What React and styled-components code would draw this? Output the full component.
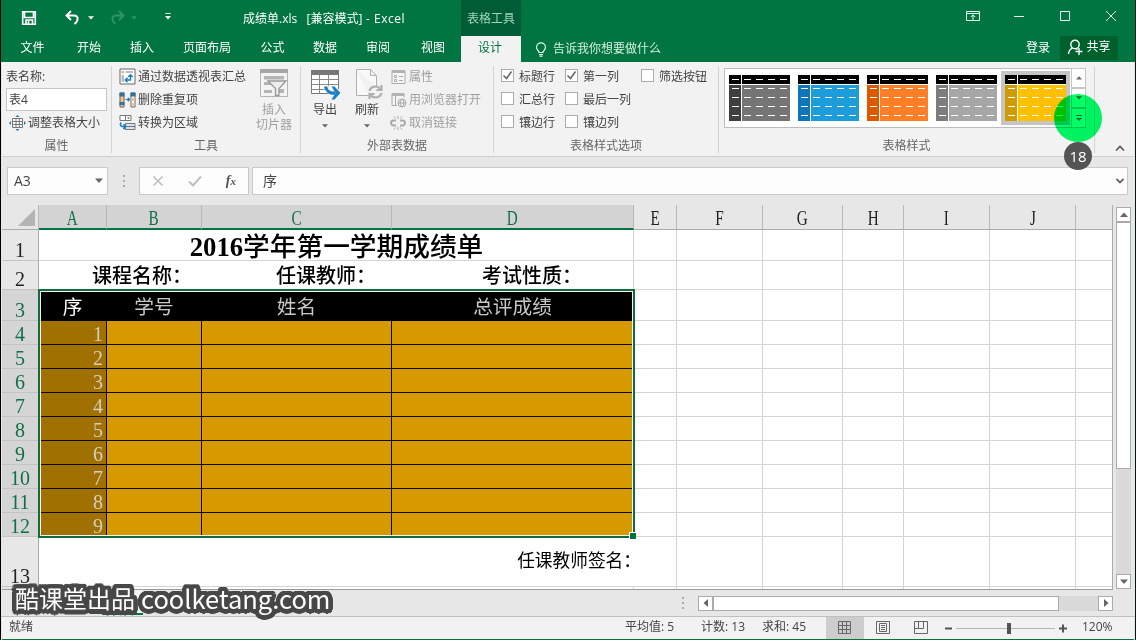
import React from "react";
import styled, { createGlobalStyle, css } from "styled-components";

const GREEN = "#007542";
const UI = '"Open Sans", "Noto Sans CJK SC", sans-serif';
const SONG = '"Liberation Serif", "Noto Sans CJK SC", serif';

const Global = createGlobalStyle`
  * { box-sizing: border-box; }
  body { margin: 0; background: #000; overflow: hidden; }
`;

const Window = styled.div`
  position: relative;
  width: 1136px;
  height: 640px;
  display: flex;
  flex-direction: column;
  border-left: 1px solid #000;
  border-right: 1px solid #001a0e;
  background: #e7e7e7;
  font: 12px/14px ${UI};
  color: #444;
  white-space: nowrap;
  overflow: hidden;
`;

/* ---------- title bar ---------- */
const TopArea = styled.header`
  height: 62px;
  background: ${GREEN};
  color: #fff;
  display: flex;
  flex-direction: column;
`;
const TitleRow = styled.div`
  height: 36px;
  display: flex;
  align-items: center;
`;
const QuickAccess = styled.div`
  width: 242px;
  display: flex;
  align-items: center;
  padding-left: 20px;
  svg { display: block; }
`;
const QuickItem = styled.span`
  margin-left: ${(p) => p.$gap}px;
`;
const DocTitle = styled.div`
  width: 218px;
  padding-top: 1px;
  white-space: pre;
  span { letter-spacing: 0.5px; }
`;
const ContextTitle = styled.div`
  width: 60px;
  height: 36px;
  background: #005c35;
  color: #9fd8b8;
  text-align: center;
  line-height: 37px;
`;
const WindowButtons = styled.div`
  margin-left: auto;
  display: flex;
  align-items: center;
  padding: 0 16px 3px 0;
`;
const TabRow = styled.nav`
  height: 26px;
  display: flex;
  align-items: stretch;
`;
const Tab = styled.div`
  width: ${(p) => p.$w}px;
  display: flex;
  align-items: center;
  justify-content: center;
  padding-bottom: 2px;
  &:first-child { padding-left: 2px; }
  ${(p) => p.$active && css`background: #f2f2f2; color: ${GREEN}; padding-right: 2px;`}
`;
const TellMe = styled.div`
  display: flex;
  align-items: center;
  gap: 6px;
  padding-left: 14px;
  color: #d5efe0;
`;
const Account = styled.div`
  margin-left: auto;
  display: flex;
  align-items: center;
  padding: 0 17px 2px 0;
`;
const Share = styled.div`
  width: 58px;
  height: 24px;
  margin-left: 10px;
  padding-bottom: 2px;
  background: #00602c;
  display: flex;
  align-items: center;
  justify-content: center;
  gap: 3px;
`;

/* ---------- ribbon ---------- */
const Ribbon = styled.section`
  height: 95px;
  margin: 0 1px;
  background: #f2f2f2;
  border-bottom: 1px solid #d0d0d0;
  display: flex;
`;
const Group = styled.div`
  width: ${(p) => p.$w}px;
  height: 87px;
  margin-top: 4px;
  border-right: 1px solid #d4d4d4;
  display: flex;
  flex-direction: column;
`;
const GroupBody = styled.div`
  height: 70px;
  display: flex;
  padding-left: ${(p) => p.$pl || 0}px;
`;
const GroupLabel = styled.div`
  text-align: center;
  line-height: 20px;
  height: 17px;
  color: #666;
`;
const Stack = styled.div`
  width: ${(p) => p.$w}px;
  display: flex;
  flex-direction: column;
`;
const Command = styled.div`
  height: 23px;
  display: flex;
  align-items: center;
  gap: ${(p) => p.$gap ?? 2}px;
  padding-left: ${(p) => p.$pl || 0}px;
  padding-bottom: 2px;
  color: ${(p) => (p.$off ? "#a0a0a0" : "#444")};
  svg { flex: none; display: block; }
`;
const NameInput = styled.div`
  width: 101px;
  height: 23px;
  margin: -1px 0 1px;
  background: #fff;
  border: 1px solid #c6c6c6;
  line-height: 21px;
  padding-left: 2px;
`;
const BigButton = styled.div`
  width: ${(p) => p.$w}px;
  display: flex;
  flex-direction: column;
  align-items: center;
  padding-top: ${(p) => (p.$tall ? 3 : 2)}px;
  line-height: 15px;
  text-align: center;
  color: ${(p) => (p.$off ? "#a0a0a0" : "#444")};
  svg { display: block; }
  span { margin: ${(p) => (p.$tall ? "1px 0 6px" : "4px 0 0")}; }
`;
const Check = styled.span`
  width: 13px;
  height: 13px;
  margin-bottom: 2px;
  border: 1px solid #ababab;
  background: #fff;
  display: flex;
  align-items: center;
  justify-content: center;
`;
const Gallery = styled.div`
  display: flex;
  height: 60px;
  margin-top: 2px;
  border: 1px solid #bdbdbd;
  background: #fff;
`;
const StyleItem = styled.div`
  width: 69px;
  height: 54px;
  margin-top: 2px;
  padding: 4px 4px 4px 4px;
  background: ${(p) => (p.$selected ? "#c5c5c5" : "#fff")};
  svg { display: block; }
`;
const GalleryButtons = styled.div`
  width: 15px;
  margin: -1px -1px -1px 1px;
  display: flex;
  flex-direction: column;
`;
const GalleryButton = styled.div`
  height: 20px;
  border: 1px solid #c6c6c6;
  display: flex;
  align-items: center;
  justify-content: center;
`;
const Collapse = styled.div`
  margin: auto 9px 4px auto;
  svg { display: block; }
`;

/* ---------- formula bar ---------- */
const FormulaBar = styled.div`
  height: 48px;
  padding: 10px 7px 0 6px;
  display: flex;
`;
const BarBox = styled.div`
  height: 28px;
  width: ${(p) => (p.$w ? p.$w + "px" : "auto")};
  flex: ${(p) => (p.$w ? "none" : 1)};
  margin-left: ${(p) => p.$ml || 0}px;
  border: 1px solid #c9c9c9;
  background: #fdfdfd;
  display: flex;
  align-items: center;
  justify-content: space-between;
  padding: ${(p) => p.$pad || "0 4px 0 6px"};
  font-size: 14px;
  svg { display: block; }
`;
const Fx = styled.em`
  font: italic bold 14px "Liberation Serif", serif;
  color: #555;
  small { font-size: 11px; }
`;
const Dots = styled.div`
  width: 31px;
  display: flex;
  flex-direction: column;
  align-items: center;
  justify-content: center;
  gap: 3px;
  height: 28px;
  i { width: 2px; height: 2px; background: #ababab; }
`;

/* ---------- sheet ---------- */
const SheetArea = styled.main`
  height: 385px;
  display: flex;
  margin: 0 1px;
`;
const Sheet = styled.div`
  position: relative;
  width: 1111px;
  height: 385px;
  background: #fff;
  border-right: 1px solid #ababab;
  border-bottom: 1px solid #999;
  overflow: hidden;
`;
const Row = styled.div`
  display: flex;
  height: ${(p) => p.$h}px;
`;
const ColHead = styled.div`
  width: ${(p) => p.$w}px;
  height: 25px;
  flex: none;
  font: 20px/27px ${SONG};
  text-align: center;
  color: ${(p) => (p.$on ? "#0f7048" : "#222")};
  background: ${(p) => (p.$on ? "#d3d3d3" : "#e7e7e7")};
  border-right: 1px solid #b8b8b8;
  border-bottom: ${(p) => (p.$on ? "2px solid " + GREEN : "1px solid #ababab")};
  svg { display: block; margin: 4px 0 0 16px; }
  span { display: inline-block; transform: scaleX(0.76); }
`;
const RowHead = styled.div`
  width: 37px;
  flex: none;
  font: 20px/20px ${SONG};
  display: flex;
  align-items: flex-end;
  justify-content: center;
  color: ${(p) => (p.$on ? "#0f7048" : "#222")};
  background: ${(p) => (p.$on ? "#d5d5d5" : "#e7e7e7")};
  border-right: 1px solid #ababab;
  border-bottom: 1px solid #c4c4c4;
`;
const Cell = styled.div`
  width: ${(p) => p.$w}px;
  flex: none;
  border-right: 1px solid #d4d4d4;
  border-bottom: 1px solid #d4d4d4;
  display: flex;
  align-items: center;
  justify-content: center;
  font: 20px/1 ${SONG};
  color: #000;
`;
const TitleCell = styled(Cell)`
  font-size: 26.7px;
  font-weight: 500;
  padding: 4px 0 0 1px;
  b { font-weight: 700; }
`;
const InfoCell = styled(Cell)`
  justify-content: flex-start;
  padding: 1px 0 0 53px;
  font-size: 20px;
  font-weight: 500;
`;
const Info = styled.span`
  width: ${(p) => p.$w}px;
  flex: none;
`;
const HeadCell = styled(Cell)`
  background: #000;
  border-color: #000;
  color: ${(p) => (p.$first ? "#fff" : "#c8c8c8")};
  font-size: 19.7px;
  padding-top: 5px;
`;
const DataCell = styled(Cell)`
  background: ${(p) => (p.$first ? "#a07000" : "#d69900")};
  border-color: #0c0a00;
  justify-content: flex-end;
  align-items: flex-end;
  line-height: 20px;
  padding-right: 3px;
  color: #d3cfc4;
`;
const SignCell = styled(Cell)`
  justify-content: flex-end;
  font-size: 17.7px;
  border-right-color: transparent;
  padding-top: 1px;
  span { margin-right: -8px; }
`;
const Selection = styled.div`
  position: absolute;
  left: 36px;
  top: 84px;
  width: 597px;
  height: 249px;
  border: 2px solid #0f6b40;
  box-shadow: inset 0 0 0 1px #f4f4ec;
`;
const Handle = styled.div`
  position: absolute;
  right: -3px;
  bottom: -3px;
  width: 7px;
  height: 7px;
  background: ${GREEN};
  border: solid #fff;
  border-width: 1px 0 0 1px;
`;

/* ---------- scroll bars ---------- */
const Filler = styled.span`
  flex: 1;
`;
const VScroll = styled.div`
  width: 15px;
  margin: 2px 0 0 3px;
  display: flex;
  flex-direction: column;
  background: #dadada;
  height: 382px;
`;
const HScroll = styled.div`
  width: 415px;
  height: 15px;
  display: flex;
  background: #dadada;
`;
const ScrollButton = styled.div`
  width: 15px;
  height: 15px;
  flex: none;
  border: 1px solid #ababab;
  background: #fff;
  display: flex;
  align-items: center;
  justify-content: center;
`;
const Thumb = styled.div`
  width: ${(p) => p.$w}px;
  height: ${(p) => p.$h}px;
  background: #fff;
  border: 1px solid #ababab;
`;

/* ---------- bottom ---------- */
const SheetTabs = styled.div`
  height: 27px;
  display: flex;
  align-items: center;
  padding-right: 22px;
  border-bottom: 1px solid #c0c0c0;
`;
const ActiveSheet = styled.div`
  width: 41px;
  height: 25px;
  margin: 0 auto 1px 101px;
  background: #f4f4f4;
  border-bottom: 2px solid ${GREEN};
`;
const StatusBar = styled.footer`
  height: 23px;
  margin: 0 1px;
  background: #f2f2f2;
  border-bottom: 1px solid ${GREEN};
  display: flex;
  align-items: center;
  padding-left: 7px;
  svg { display: block; }
`;
const Stat = styled.div`
  width: ${(p) => p.$w}px;
  flex: none;
  padding-bottom: 2px;
`;
const ViewButton = styled.div`
  width: 38px;
  height: 22px;
  flex: none;
  display: flex;
  align-items: center;
  justify-content: center;
  background: ${(p) => (p.$on ? "#cdcdcd" : "transparent")};
`;
const Zoom = styled.div`
  display: flex;
  align-items: center;
  width: 142px;
  flex: none;
`;

/* ---------- overlays ---------- */
const ClickSpot = styled.div`
  position: absolute;
  left: 1053px;
  top: 94px;
  width: 48px;
  height: 48px;
  border-radius: 50%;
  background: #00ff66;
  mix-blend-mode: multiply;
`;
const Badge = styled.div`
  position: absolute;
  left: 1063px;
  top: 142px;
  width: 28px;
  height: 28px;
  border-radius: 50%;
  background: #545454;
  color: #fff;
  font: 15px/28px ${UI};
  text-align: center;
`;
/* a ring of hard shadows gives the letters a thick outline with round corners */
const OUTLINE = [2.5, 4.5]
  .flatMap((r) =>
    Array.from({ length: 20 }, (_, i) => {
      const a = (i * Math.PI) / 10;
      return `${(r * Math.cos(a)).toFixed(2)}px ${(r * Math.sin(a)).toFixed(2)}px 0 #484848`;
    })
  )
  .join(", ");
const Watermark = styled.div`
  position: absolute;
  left: 14px;
  top: 582px;
  display: flex;
  gap: 6px;
  font: 24px/32px "Noto Sans CJK SC", sans-serif;
  color: #fff;
  text-shadow: ${OUTLINE};
  span + span { font-size: 25.5px; }
`;

const Triangle = ({ dir = "down", size = 7, color = "#666" }) => {
  const d = { down: "M0 1.5h8L4 6z", up: "M0 6h8L4 1.5z", left: "M6 0v8L1.5 4z", right: "M2 0v8l4.5-4z" }[dir];
  return <svg width={size} height={size} viewBox="0 0 8 8"><path d={d} fill={color} /></svg>;
};

const PivotIcon = () => (
  <svg width="17" height="17" viewBox="0 0 17 17" fill="none">
    <path d="M1 1h15v15H1z" fill="#fff" stroke="#666" />
    <path d="M2.500 3h2.500v2.500H2.500zM6.500 3H14v2H6.500zM2.500 7H5v7H2.500z" fill="#bbb" />
    <path d="M6.500 12h5V7M8.500 9.800L6.300 12l2.200 2.200M9.300 9l2.200-2.200L13.700 9" stroke="#1c7db8" strokeWidth="1.500" />
  </svg>
);
const DedupeIcon = () => (
  <svg width="17" height="16" viewBox="0 0 17 16" fill="none">
    <path d="M1 1h4v14H1z" fill="#f0c48a" stroke="#666" />
    <path d="M.5.5h5v4h-5z" fill="#3b6f96" /><path d="M.5 10h5v3h-5z" fill="#3b6f96" />
    <path d="M12 1h4v14h-4z" fill="#fff" stroke="#666" />
    <path d="M11.500.5h5v4h-5z" fill="#3b6f96" /><path d="M12.500 6h3v3h-3zM12.500 11h3v3h-3z" fill="#f0c48a" />
    <path d="M6.500 7.500h4M8.700 5.700l1.900 1.800-1.900 1.800" stroke="#1c7db8" strokeWidth="1.200" />
  </svg>
);
const ConvertIcon = () => (
  <svg width="17" height="17" viewBox="0 0 17 17" fill="none">
    <path d="M1 1.500h11v5H1zM6.500 1.500v5" fill="#fff" stroke="#777" />
    <path d="M8 3.500h3L9.500 5z" fill="#555" />
    <path d="M6.500 9.500H16v6H6.500zM6.500 12.500H16" fill="#d8e2ee" stroke="#777" />
    <path d="M2 8.500c-1.500 3 0 4.500 4.500 4M4.500 10.200l2.300 2.300-2.300 2.700" stroke="#1c7db8" strokeWidth="1.600" />
  </svg>
);
const ResizeIcon = () => (
  <svg width="17" height="16" viewBox="0 0 17 16" fill="none">
    <path d="M3.500 3.500h10v9h-10z" fill="#fff" stroke="#777" />
    <path d="M3.500 6.500h10M3.500 9.500h10M7 3.500v9M10.300 3.500v9" stroke="#777" />
    <path d="M6.500 2l2-2 2 2zM6.500 14l2 2 2-2zM2 6L0 8l2 2zM15 6l2 2-2 2z" fill="#1c7db8" />
  </svg>
);
const SlicerIcon = () => (
  <svg width="30" height="30" viewBox="0 0 30 30" fill="none">
    <path d="M1.500 1.500h27v27h-27z" fill="#f4f4f4" stroke="#b5b5b5" />
    <path d="M1 1h28v4H1z" fill="#a6a6a6" />
    <path d="M5 8h20v3.500H5zM5 14h20v3H5zM5 22h8v3H5zM20 21h5v4h-5z" fill="#b5b5b5" />
    <path d="M9 13h18l-7 7.500v7h-3.500v-7z" fill="#eee" stroke="#999" strokeWidth="1.300" />
  </svg>
);
const ExportIcon = () => (
  <svg width="32" height="32" viewBox="0 0 32 32" fill="none">
    <path d="M2.500 2h27v22.500h-27z" fill="#fff" stroke="#777" />
    <path d="M2 1h28v5H2z" fill="#777" />
    <path d="M2.500 10.500h27M2.500 15.500h27M2.500 20.500h27M10.500 6v18M19.500 6v18" stroke="#888" />
    <path d="M17 17c1 5 5 7 9 6.500M23 18l7.500 6-7.500 6" stroke="#f2f2f2" strokeWidth="5" />
    <path d="M16.500 17.500c1 5 5 7 9.500 6.500" stroke="#1e7fbe" strokeWidth="3.200" />
    <path d="M22.500 17.500h3l6 6.500-6 6.500h-3l4-6.500z" fill="#1e7fbe" />
  </svg>
);
const RefreshIcon = () => (
  <svg width="32" height="32" viewBox="0 0 32 32" fill="none">
    <path d="M5.500 .5h14l6 6v11M5.500 .5v26h12M19.500 .5v6h6" fill="#f9f9f9" stroke="#b0b0b0" />
    <path d="M18.500 22c1-5 8-6 11-2M30.500 16v5h-5M30.500 24c-1 5-8 6-11 2M18.500 30v-5h5" stroke="#b0b0b0" strokeWidth="2.200" />
  </svg>
);
const PropsIcon = () => (
  <svg width="15" height="16" viewBox="0 0 15 16" fill="none">
    <path d="M1 1.500h13v13H1z" fill="#f7f7f7" stroke="#aaa" />
    <path d="M1 1h13v3H1z" fill="#b4b4b4" />
    <path d="M3.500 6.500h2v2h-2zM3.500 10.500h2v2h-2zM8 7.500h4M8 11.500h4" stroke="#aaa" />
  </svg>
);
const BrowserIcon = () => (
  <svg width="16" height="16" viewBox="0 0 16 16" fill="none">
    <path d="M1 13.500V1.500h12v4M1 13.500h5M4.500 4v9" stroke="#aaa" />
    <path d="M1 1h12v3H1z" fill="#b4b4b4" />
    <circle cx="11" cy="11" r="4" fill="#f2f2f2" stroke="#aaa" />
    <path d="M7 11h8M11 7c-2.500 2.500-2.500 5.500 0 8M11 7c2.500 2.500 2.500 5.500 0 8" stroke="#aaa" />
  </svg>
);
const UnlinkIcon = () => (
  <svg width="16" height="16" viewBox="0 0 16 16" fill="none" stroke="#aaa">
    <path d="M6 5.500H3.500a2.500 2.500 0 000 5H6M10 5.500h2.500a2.500 2.500 0 010 5H10" strokeWidth="1.900" />
    <path d="M8 1v3M8 12v3M4 1.500l1.500 2M12 1.500l-1.500 2M4 14.500l1.500-2M12 14.500l-1.500-2" />
  </svg>
);

const Option = ({ on, children }) => (
  <Command $gap={5}>
    <Check>
      {on && <svg width="11" height="11" viewBox="0 0 11 11"><path d="M1.500 5.500l3 3 5-7" fill="none" stroke="#666" strokeWidth="1.600" /></svg>}
    </Check>
    {children}
  </Command>
);

const StyleThumb = ({ side, body, selected }) => (
  <StyleItem $selected={selected}>
    <svg width="61" height="46" viewBox="0 0 61 46">
      <path d="M0 0h61v46H0z" fill={body} />
      <path d="M0 10h12v36H0z" fill={side} />
      <path d="M0 0h61v9H0z" fill="#000" />
      <path d="M0 9.500h61M12.500 0v46" stroke="#fff" />
      {[4.5, 13.5, 22.5, 31.5, 40.5].map((y) => (
        <path key={y} d={`M3 ${y}h7M15 ${y}h7M27 ${y}h7M39 ${y}h7M51 ${y}h7`} stroke="#fff" />
      ))}
    </svg>
  </StyleItem>
);

const STYLES = [
  ["#3f3f3f", "#757575"],
  ["#0f75b8", "#1c9cd8"],
  ["#dd5800", "#ff7f27"],
  ["#7d7d7d", "#a6a6a6"],
  ["#d09a00", "#ffc000"],
];
const COLS = [["A", 68], ["B", 95], ["C", 190], ["D", 242], ["E", 43], ["F", 86], ["G", 80], ["H", 61], ["I", 86], ["J", 86], ["", 37]];
const REST = COLS.slice(4);
const TABS = [["文件", 61], ["开始", 54], ["插入", 52], ["页面布局", 78], ["公式", 53], ["数据", 52], ["审阅", 54], ["视图", 56], ["设计", 60]];

const EmptyCells = () => REST.map(([name, w], i) => <Cell key={i} $w={w} />);

export default function App() {
  return (
    <Window>
      <Global />
      <TopArea>
        <TitleRow>
          <QuickAccess>
            <svg width="16" height="16" viewBox="0 0 16 16" fill="none" stroke="#fff" strokeWidth="1.600"><path d="M1.700 1.700h12.600v12.600H1.700zM3.500 2v5.500h9V2M5 14v-4h6.500v4M7.500 11v3" /></svg>
            <QuickItem $gap={27}>
              <svg width="18" height="16" viewBox="0 0 18 16" fill="none" stroke="#fff" strokeWidth="1.900"><path d="M3 5.500h7c4.500 0 5 5 .5 8.500M7 1L2.500 5.500 7 10" /></svg>
            </QuickItem>
            <QuickItem $gap={6}><Triangle size={6} color="#fff" /></QuickItem>
            <QuickItem $gap={14}>
              <svg width="18" height="16" viewBox="0 0 18 16" fill="none" stroke="#2c9766" strokeWidth="1.800"><path d="M15 5.500H8c-4.500 0-5 5-.5 8.500M11 1l4.500 4.500L11 10" /></svg>
            </QuickItem>
            <QuickItem $gap={5}><Triangle size={6} color="#2c9766" /></QuickItem>
            <QuickItem $gap={27}>
              <svg width="8" height="14" viewBox="0 0 8 14"><path d="M1.500 2.500h5" stroke="#fff" /><path d="M1 5h6L4 8.500z" fill="#fff" /></svg>
            </QuickItem>
          </QuickAccess>
          <DocTitle>{"成绩单.xls   [兼容模式]"}<span>{" - Excel"}</span></DocTitle>
          <ContextTitle>表格工具</ContextTitle>
          <WindowButtons>
            <svg width="154" height="14" viewBox="0 0 154 14" fill="none" stroke="#e6fff2">
              <path d="M1.500 1.500h13v9h-13zM1.500 3.500h13M8 10V5M5.800 7L8 4.800 10.200 7" />
              <path d="M49 6.500h10M95.500 1.500h9v9h-9zM141 1l10 10M151 1l-10 10" />
            </svg>
          </WindowButtons>
        </TitleRow>
        <TabRow>
          {TABS.map(([name, w]) => (
            <Tab key={name} $w={w} $active={name === "设计"}>{name}</Tab>
          ))}
          <TellMe>
            <svg width="12" height="15" viewBox="0 0 12 15" fill="none" stroke="#e6fff2" strokeWidth="1.200"><path d="M4 10.500c0-2-2.500-2.500-2.500-5.200a4.500 4.500 0 019 0C10.500 8 8 8.500 8 10.500zM4 12.500h4M4.500 14.200h3" /></svg>
            告诉我你想要做什么
          </TellMe>
          <Account>
            登录
            <Share>
              <svg width="16" height="16" viewBox="0 0 16 16" fill="none" stroke="#fff" strokeWidth="1.400"><circle cx="8" cy="5.500" r="4.200" /><path d="M1.500 15c.3-3.500 2-5 4-5.800M9 9.500l1.500 1M8.500 12.500h7M12 9v7" /></svg>
              共享
            </Share>
          </Account>
        </TabRow>
      </TopArea>

      <Ribbon>
        <Group $w={110}>
          <GroupBody $pl={4}>
            <Stack>
              <Command $gap={0}>表名称:</Command>
              <NameInput>表4</NameInput>
              <Command $pl={3} $gap={2}><ResizeIcon />调整表格大小</Command>
            </Stack>
          </GroupBody>
          <GroupLabel>属性</GroupLabel>
        </Group>
        <Group $w={189}>
          <GroupBody $pl={7}>
            <Stack $w={134}>
              <Command><PivotIcon />通过数据透视表汇总</Command>
              <Command><DedupeIcon />删除重复项</Command>
              <Command><ConvertIcon />转换为区域</Command>
            </Stack>
            <BigButton $w={42} $off><SlicerIcon /><span>插入<br />切片器</span></BigButton>
          </GroupBody>
          <GroupLabel>工具</GroupLabel>
        </Group>
        <Group $w={193}>
          <GroupBody $pl={3}>
            <BigButton $w={42} $tall><ExportIcon /><span>导出</span><Triangle size={6} /></BigButton>
            <BigButton $w={42} $tall><RefreshIcon /><span>刷新</span><Triangle size={6} /></BigButton>
            <Stack $w={96}>
              <Command $off $pl={3} $gap={3}><PropsIcon />属性</Command>
              <Command $off $pl={3}><BrowserIcon />用浏览器打开</Command>
              <Command $off $pl={2} $gap={3}><UnlinkIcon />取消链接</Command>
            </Stack>
          </GroupBody>
          <GroupLabel>外部表数据</GroupLabel>
        </Group>
        <Group $w={225}>
          <GroupBody $pl={7}>
            <Stack $w={64}><Option on>标题行</Option><Option>汇总行</Option><Option>镶边行</Option></Stack>
            <Stack $w={76}><Option on>第一列</Option><Option>最后一列</Option><Option>镶边列</Option></Stack>
            <Stack $w={70}><Option>筛选按钮</Option></Stack>
          </GroupBody>
          <GroupLabel>表格样式选项</GroupLabel>
        </Group>
        <Group $w={376}>
          <GroupBody $pl={5}>
            <Gallery>
              {STYLES.map(([side, body], i) => <StyleThumb key={side} side={side} body={body} selected={i === 4} />)}
              <GalleryButtons>
                <GalleryButton><Triangle dir="up" size={6} /></GalleryButton>
                <GalleryButton><Triangle size={6} /></GalleryButton>
                <GalleryButton><svg width="6" height="8" viewBox="0 0 6 8"><path d="M0 1.500h6" stroke="#666" /><path d="M0 4h6L3 7z" fill="#666" /></svg></GalleryButton>
              </GalleryButtons>
            </Gallery>
          </GroupBody>
          <GroupLabel>表格样式</GroupLabel>
        </Group>
        <Collapse><svg width="10" height="8" viewBox="0 0 10 8"><path d="M1 6.500l4-4 4 4" fill="none" stroke="#555" strokeWidth="1.600" /></svg></Collapse>
      </Ribbon>

      <FormulaBar>
        <BarBox $w={101}>A3<Triangle size={8} /></BarBox>
        <Dots><i /><i /><i /></Dots>
        <BarBox $w={110} $pad="0 12px 0 12px">
          <svg width="12" height="12" viewBox="0 0 12 12"><path d="M1.500 1.500l9 9M10.500 1.500l-9 9" stroke="#c0c0c0" strokeWidth="1.700" /></svg>
          <svg width="14" height="12" viewBox="0 0 14 12"><path d="M1 6.500l4 4 8-9" fill="none" stroke="#c0c0c0" strokeWidth="2" /></svg>
          <Fx>f<small>x</small></Fx>
        </BarBox>
        <BarBox $ml={3} $pad="0 2px 0 10px">
          序
          <svg width="10" height="8" viewBox="0 0 10 8"><path d="M1.500 2l3.500 3.500L8.500 2" fill="none" stroke="#666" strokeWidth="1.800" /></svg>
        </BarBox>
      </FormulaBar>

      <SheetArea>
        <Sheet>
          <Row $h={25}>
            <ColHead $w={37}><svg width="17" height="17" viewBox="0 0 17 17"><path d="M17 0v17H0z" fill="#b4b4b4" /></svg></ColHead>
            {COLS.map(([name, w], i) => <ColHead key={i} $w={w} $on={i < 4}><span>{name}</span></ColHead>)}
          </Row>
          <Row $h={31}>
            <RowHead>1</RowHead>
            <TitleCell $w={595}><b>2016</b>学年第一学期成绩单</TitleCell>
            <EmptyCells />
          </Row>
          <Row $h={29}>
            <RowHead>2</RowHead>
            <InfoCell $w={595}><Info $w={184}>课程名称：</Info><Info $w={206}>任课教师：</Info><Info $w={110}>考试性质：</Info></InfoCell>
            <EmptyCells />
          </Row>
          <Row $h={31}>
            <RowHead $on>3</RowHead>
            {["序", "学号", "姓名", "总评成绩"].map((t, i) => <HeadCell key={t} $w={COLS[i][1]} $first={i === 0}>{t}</HeadCell>)}
            <EmptyCells />
          </Row>
          {[1, 2, 3, 4, 5, 6, 7, 8, 9].map((n) => (
            <Row key={n} $h={24}>
              <RowHead $on>{n + 3}</RowHead>
              <DataCell $w={68} $first>{n}</DataCell>
              <DataCell $w={95} /><DataCell $w={190} /><DataCell $w={242} />
              <EmptyCells />
            </Row>
          ))}
          <Row $h={50}>
            <RowHead>13</RowHead>
            <SignCell $w={595}><span>任课教师签名：</span></SignCell>
            <EmptyCells />
          </Row>
          <Row $h={4}><RowHead /><Cell $w={595} /><EmptyCells /></Row>
          <Selection><Handle /></Selection>
        </Sheet>
        <VScroll>
          <ScrollButton><Triangle dir="up" size={8} /></ScrollButton>
          <Thumb $w={15} $h={247} />
          <Filler />
          <ScrollButton><Triangle size={8} /></ScrollButton>
        </VScroll>
      </SheetArea>

      <SheetTabs>
        <ActiveSheet />
        <Dots><i /><i /><i /></Dots>
        <HScroll>
          <ScrollButton><Triangle dir="left" size={8} /></ScrollButton>
          <Thumb $w={346} $h={15} />
          <Filler />
          <ScrollButton><Triangle dir="right" size={8} /></ScrollButton>
        </HScroll>
      </SheetTabs>

      <StatusBar>
        <Stat $w={616}>就绪</Stat>
        <Stat $w={76}>平均值: 5</Stat>
        <Stat $w={61}>计数: 13</Stat>
        <Stat $w={64}>求和: 45</Stat>
        <ViewButton $on><svg width="14" height="14" viewBox="0 0 14 14"><path d="M.5.5h12v12H.5zM.5 4.500h12M.5 8.500h12M4.500.5v12M8.500.5v12" fill="none" stroke="#666" /></svg></ViewButton>
        <ViewButton><svg width="14" height="14" viewBox="0 0 14 14"><path d="M.5.5h13v12H.5zM3.500 2.500h7v8h-7zM5 4.500h4M5 6.500h4M5 8.500h4" fill="none" stroke="#666" /></svg></ViewButton>
        <ViewButton><svg width="14" height="14" viewBox="0 0 14 14"><path d="M.5.5h13v12H.5zM4.500.5v7h5v-7M.5 7.500h4" fill="none" stroke="#666" /></svg></ViewButton>
        <Zoom>
          <svg width="140" height="14" viewBox="0 0 140 14"><path d="M5 7.500h7M119 7.500h8M123 3.500v8" stroke="#555" strokeWidth="2" /><path d="M16 7.500h99" stroke="#b5b5b5" /><path d="M67 2h4v11h-4z" fill="#555" /></svg>
        </Zoom>
        <Stat $w={34}>120%</Stat>
      </StatusBar>

      <ClickSpot />
      <Badge>18</Badge>
      <Watermark><span>酷课堂出品</span><span>coolketang.com</span></Watermark>
    </Window>
  );
}
